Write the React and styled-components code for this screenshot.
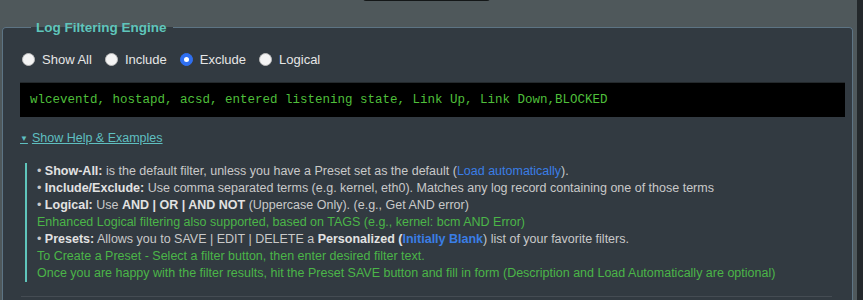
import React, { useState } from 'react';
import styled, { createGlobalStyle } from 'styled-components';

const GlobalStyle = createGlobalStyle`
  html, body {
    margin: 0;
    padding: 0;
    background: #4f585b;
    font-family: "Liberation Sans", Arial, sans-serif;
  }
`;

const Page = styled.div`
  display: flex;
  height: 300px;
  overflow: hidden;
  background: #4f585b;
`;

const Main = styled.div`
  position: relative;
  flex: 1;
  padding: 20px 4px 0 2px;
`;

const TopTab = styled.div`
  position: absolute;
  top: -3px;
  left: 363px;
  width: 127px;
  height: 4px;
  background: #141718;
  border-radius: 0 0 3px 3px;
`;

const EdgeStrip = styled.div`
  width: 6px;
  background: #23282b;
`;

const Fieldset = styled.fieldset`
  margin: 0;
  padding: 12px 7px 0 17px;
  min-height: 300px;
  border: 1px solid #5d7484;
  border-bottom: none;
  border-radius: 4px 4px 0 0;
  background: #323a41;
  box-sizing: border-box;
`;

const Legend = styled.legend`
  margin-left: 11px;
  padding: 0 6px 0 5px;
  font-size: 13.5px;
  font-weight: bold;
  color: #5fc5bb;
`;

const RadioRow = styled.div`
  display: flex;
  align-items: center;
  gap: 13px;
  height: 20px;
  margin-top: 2px;
  padding-left: 2px;
`;

const RadioLabel = styled.label`
  display: flex;
  align-items: center;
  gap: 7px;
  font-size: 13px;
  color: #e6e6e6;
  cursor: pointer;
`;

const Radio = styled.input.attrs({ type: 'radio' })`
  appearance: none;
  margin: 0;
  width: 13px;
  height: 13px;
  border-radius: 50%;
  background: #f4f4f4;
  border: 1px solid #bdbdbd;
  box-sizing: border-box;
  position: relative;

  &:checked {
    background: #2f6ff0;
    border-color: #2f6ff0;
  }

  &:checked::after {
    content: '';
    position: absolute;
    left: 50%;
    top: 50%;
    width: 5px;
    height: 5px;
    margin: -2.5px 0 0 -2.5px;
    border-radius: 50%;
    background: #ffffff;
  }
`;

const FilterBox = styled.div`
  margin-top: 13px;
  height: 34px;
  display: flex;
  align-items: center;
  padding-left: 10px;
  background: #000000;
  border-top: 1px solid #24292c;
  font-family: "Liberation Mono", "Courier New", monospace;
  font-size: 12.5px;
  color: #4fbf3b;
  white-space: pre;
`;

const HelpToggle = styled.a`
  display: inline-block;
  margin-top: 14px;
  font-size: 12.5px;
  color: #5fbfc0;
  text-decoration: underline;
  cursor: pointer;
`;

const Caret = styled.span`
  font-size: 8px;
  margin-right: 4px;
  vertical-align: 1px;
`;

const HelpBox = styled.div`
  margin: 17px 0 0 5px;
  padding-left: 10px;
  border-left: 2px solid #5fc5bb;
  font-size: 12.5px;
  line-height: 17px;
  color: #c9c9c9;
`;

const Line = styled.div`
  color: ${p => (p.$green ? '#4bb548' : '#c9c9c9')};
  white-space: nowrap;
`;

const Strong = styled.b`
  color: #e2e2e2;
`;

const Blue = styled.span`
  color: #3a7ee6;
  font-weight: ${p => (p.$bold ? 'bold' : 'normal')};
`;

const Divider = styled.div`
  margin: 14px 13px 0 1px;
  height: 1px;
  background: #454c53;
`;

const modes = ['Show All', 'Include', 'Exclude', 'Logical'];

export default function App() {
  const [mode, setMode] = useState('Exclude');

  return (
    <>
      <GlobalStyle />
      <Page>
        <Main>
          <TopTab />
          <Fieldset>
            <Legend>Log Filtering Engine</Legend>
            <RadioRow>
              {modes.map(m => (
                <RadioLabel key={m}>
                  <Radio name="mode" checked={mode === m} onChange={() => setMode(m)} />
                  {m}
                </RadioLabel>
              ))}
            </RadioRow>
            <FilterBox>wlceventd, hostapd, acsd, entered listening state, Link Up, Link Down,BLOCKED</FilterBox>
            <HelpToggle><Caret>▼</Caret>Show Help &amp; Examples</HelpToggle>
            <HelpBox>
              <Line>• <Strong>Show-All:</Strong> is the default filter, unless you have a Preset set as the default (<Blue>Load automatically</Blue>).</Line>
              <Line>• <Strong>Include/Exclude:</Strong> Use comma separated terms (e.g. kernel, eth0). Matches any log record containing one of those terms</Line>
              <Line>• <Strong>Logical:</Strong> Use <Strong>AND | OR | AND NOT</Strong> (Uppercase Only). (e.g., Get AND error)</Line>
              <Line $green>Enhanced Logical filtering also supported, based on TAGS (e.g., kernel: bcm AND Error)</Line>
              <Line>• <Strong>Presets:</Strong> Allows you to SAVE | EDIT | DELETE a <Strong>Personalized</Strong> <Strong>(</Strong><Blue $bold>Initially Blank</Blue>) list of your favorite filters.</Line>
              <Line $green>To Create a Preset - Select a filter button, then enter desired filter text.</Line>
              <Line $green>Once you are happy with the filter results, hit the Preset SAVE button and fill in form (Description and Load Automatically are optional)</Line>
            </HelpBox>
            <Divider />
          </Fieldset>
        </Main>
        <EdgeStrip />
      </Page>
    </>
  );
}
